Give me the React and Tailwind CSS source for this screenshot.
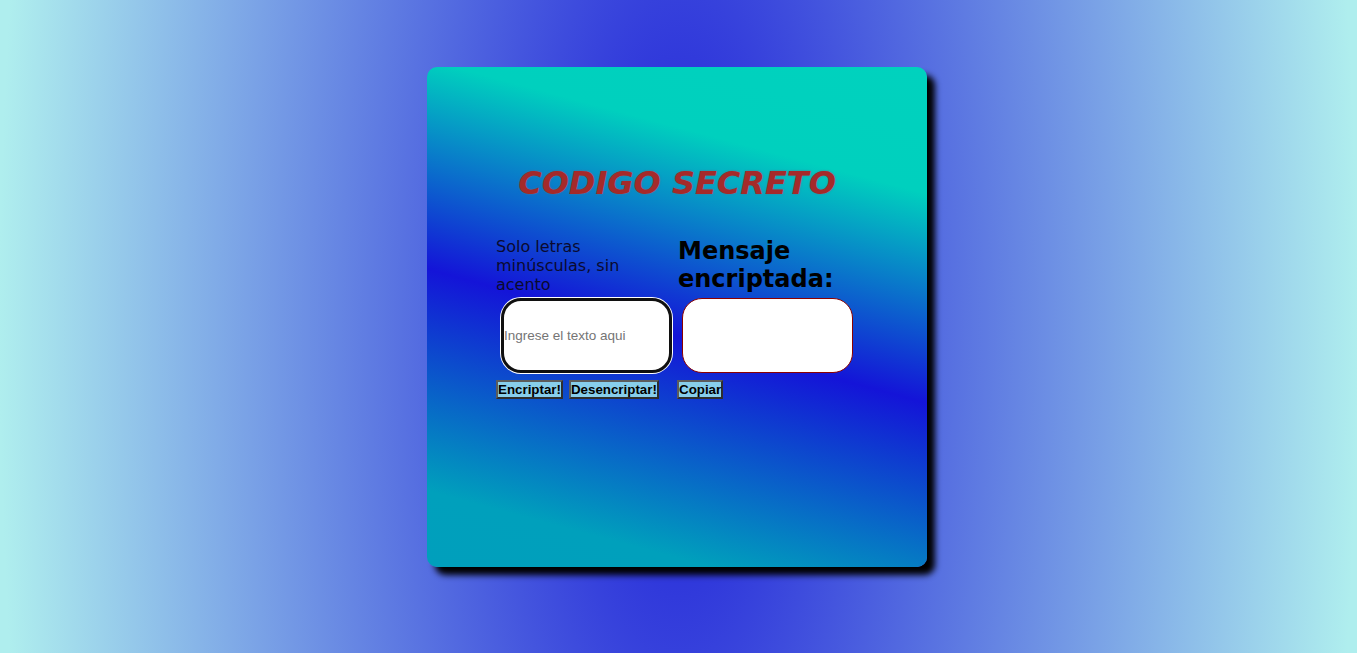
import { useState } from "react";

export default function App() {
  const [texto, setTexto] = useState("");
  const [resultado, setResultado] = useState("");

  return (
    <div className="min-h-screen w-full flex justify-center pt-[67px] pr-[3px] bg-[radial-gradient(ellipse_679px_1900px_at_50%_50%,#1c1cd8_0%,#afeeee_100%)] font-['DejaVu_Sans',sans-serif]">
      {/* Card */}
      <div className="w-[500px] h-[500px] rounded-[10px] shadow-[8px_8px_6px_#000] bg-[linear-gradient(195deg,#00d2be_0%,#00d0be_20%,#1414d8_53%,#00a0bc_88%,#009fbc_100%)] flex flex-col items-center">
        <h1 className="mt-[97px] text-[32px] leading-[normal] font-bold italic text-[#a52a2a] [text-shadow:0_0_2px_#6b6b8a]">
          CODIGO SECRETO
        </h1>

        <div className="mt-[35px] flex w-[362px]">
          {/* Entrada */}
          <div className="w-[182px] flex flex-col items-start">
            <p className="w-[180px] text-[16px] leading-[normal] text-[#0a0a30]">
              Solo letras minúsculas, sin acento
            </p>
            <input
              value={texto}
              onChange={(e) => setTexto(e.target.value)}
              placeholder="Ingrese el texto aqui"
              className="mt-[4px] ml-[5px] w-[171px] h-[75px] rounded-[20px] bg-white border-[3px] border-[#101010] shadow-[0_0_0_1px_#fff] p-0 text-[13.5px] font-['Liberation_Sans',sans-serif] text-black placeholder:text-[#757575] outline-none"
            />
            <div className="mt-[7px] flex gap-[6px]">
              <button
                onClick={() => setResultado(texto)}
                className="bg-[#87ceeb] border-2 border-t-[#5c5c5c] border-l-[#5c5c5c] border-b-[#2e2e2e] border-r-[#2e2e2e] p-0 text-[13.33px] leading-[normal] font-bold font-['Liberation_Sans',sans-serif] text-black"
              >
                Encriptar!
              </button>
              <button
                onClick={() => setResultado(texto)}
                className="bg-[#87ceeb] border-2 border-t-[#5c5c5c] border-l-[#5c5c5c] border-b-[#2e2e2e] border-r-[#2e2e2e] p-0 text-[13.33px] leading-[normal] font-bold font-['Liberation_Sans',sans-serif] text-black"
              >
                Desencriptar!
              </button>
            </div>
          </div>

          {/* Salida */}
          <div className="w-[180px] flex flex-col items-start">
            <h2 className="text-[24px] leading-[normal] font-bold text-black">
              Mensaje encriptada:
            </h2>
            <textarea
              readOnly
              value={resultado}
              className="mt-[5px] ml-[4px] w-[171px] h-[75px] rounded-[20px] bg-white border border-[#8b0000] resize-none outline-none"
            />
            <button className="mt-[7px] -ml-px bg-[#87ceeb] border-2 border-t-[#5c5c5c] border-l-[#5c5c5c] border-b-[#2e2e2e] border-r-[#2e2e2e] p-0 text-[13.33px] leading-[normal] font-bold font-['Liberation_Sans',sans-serif] text-black">
              Copiar
            </button>
          </div>
        </div>
      </div>
    </div>
  );
}
